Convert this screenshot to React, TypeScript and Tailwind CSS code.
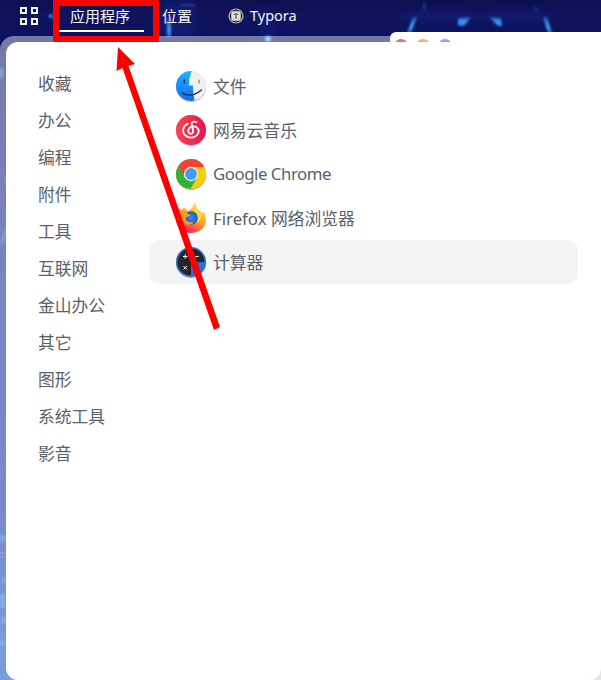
import type { ReactNode } from "react";

const categories = ["收藏", "办公", "编程", "附件", "工具", "互联网", "金山办公", "其它", "图形", "系统工具", "影音"];

function FilesIcon() {
  return (
    <svg viewBox="0 0 32 32" className="size-8">
      <defs>
        <linearGradient id="finder" x1="0" y1="0" x2="0" y2="1"><stop stopColor="#18b9ff" /><stop offset="1" stopColor="#1767ed" /></linearGradient>
        <clipPath id="disc"><circle cx="16" cy="16" r="15" /></clipPath>
      </defs>
      <circle cx="16" cy="16.7" r="15.2" fill="#b9b9bd" />
      <g clipPath="url(#disc)">
        <path d="M0 0H32V32H0z" fill="#f0f0f1" />
        <path d="M0 0H17Q14 7 13.8 15.5H18Q17.7 24 20 32H0z" fill="url(#finder)" />
      </g>
      <path d="M9.3 10v3" fill="none" stroke="#20242e" strokeWidth="1.2" strokeLinecap="round" />
      <path d="M24 10v3" fill="none" stroke="#777" strokeWidth="1.2" strokeLinecap="round" />
      <path d="M7.5 23Q16 28.5 26.5 20" fill="none" stroke="#20242e" strokeWidth="1.2" strokeLinecap="round" />
    </svg>
  );
}

function MusicIcon() {
  return (
    <svg viewBox="0 0 32 32" className="size-8">
      <defs><linearGradient id="music"><stop stopColor="#ff4050" /><stop offset="1" stopColor="#e9144c" /></linearGradient></defs>
      <circle cx="16" cy="16.7" r="15.2" fill="#b8a9ad" />
      <circle cx="16" cy="16" r="15" fill="url(#music)" />
      <path d="M21.5 8.2C18.8 6.8 16.4 8 16.7 10.4L18.1 17C18.5 19.6 15.3 20.7 13.8 18.7C12.2 16.2 14.2 13 17.4 12.4C22.4 11.6 25.2 16.2 22.8 20.1C20.5 23.9 14.5 24.8 10.8 21.8C6.2 18 7.9 11.6 12.7 9.8" fill="none" stroke="#fff" strokeWidth="1.8" strokeLinecap="round" />
    </svg>
  );
}

function ChromeIcon() {
  return (
    <svg viewBox="0 0 32 32" className="size-8">
      <circle cx="16" cy="16.7" r="15.2" fill="#aab3a4" />
      <circle cx="16" cy="16" r="15" fill="#fccb08" />
      <path d="M3.2 8.2A15 15 0 0 1 29.3 9H16L9 18.5z" fill="#ed4634" />
      <path d="M3.2 8.2A15 15 0 0 0 15.5 31L22.2 19.5 16 23 9.8 19.5z" fill="#2fb13b" />
      <circle cx="16" cy="16" r="7.2" fill="#e9efe8" />
      <circle cx="16" cy="16" r="5.9" fill="#439af7" />
    </svg>
  );
}

function FirefoxIcon() {
  return (
    <svg viewBox="0 0 32 32" className="size-8">
      <defs>
        <linearGradient id="fox" x1=".8" y1=".1" x2=".3" y2="1"><stop stopColor="#ffe44b" /><stop offset=".5" stopColor="#ff9a29" /><stop offset=".75" stopColor="#ff523f" /><stop offset="1" stopColor="#f50980" /></linearGradient>
        <radialGradient id="globe"><stop stopColor="#328ef7" /><stop offset="1" stopColor="#1760bd" /></radialGradient>
      </defs>
      <path d="M4 6L7 8L9 5L12 9Q15 8 17 6L20 0Q21 6 25 9L28 11L28 8Q31 13 31 18C31 26 24 31 16 31C8 31 1 25 1 17Q1 10 4 6z" fill="url(#fox)" />
      <circle cx="16" cy="16" r="6.7" fill="url(#globe)" />
      <path d="M5 9L12 9Q11 12 16 13Q13 15 11 15Q10 18 12 19Q15 21 19 20Q16 24 11 22Q6 19 5 9z" fill="#ff9c1f" />
      <path d="M19 2Q18 6 20 9Q25 14 22 21Q28 17 27 10Q21 7 20 1z" fill="#ffd83e" />
    </svg>
  );
}

function CalculatorIcon() {
  return (
    <svg viewBox="0 0 32 32" className="size-8">
      <circle cx="16" cy="16.7" r="15.2" fill="#aaa" />
      <circle cx="16" cy="16" r="15" fill="#2671d3" />
      <path d="M16 2.5A13.5 13.5 0 0 0 16 29.5V16H29.5A13.5 13.5 0 0 0 16 2.5" fill="#252529" />
      <path d="M8 10.5h4.4M10.2 8.3v4.4M19.5 10.5h4.2M8.5 20l3.5 3.5m0-3.5-3.5 3.5" stroke="#fff" strokeWidth="1" />
    </svg>
  );
}

const apps: { name: string; icon: ReactNode; labelClass?: string; active?: boolean }[] = [
  { name: "文件", icon: <FilesIcon /> },
  { name: "网易云音乐", icon: <MusicIcon /> },
  { name: "Google Chrome", icon: <ChromeIcon />, labelClass: "tracking-[-0.45px]" },
  { name: "Firefox 网络浏览器", icon: <FirefoxIcon /> },
  { name: "计算器", icon: <CalculatorIcon />, active: true },
];

function Wallpaper() {
  return (
    <svg className="absolute inset-0 size-full" viewBox="0 0 601 680" preserveAspectRatio="none">
      <defs>
        <linearGradient id="top" x1="0" y1="0" x2="0" y2="1"><stop stopColor="#0b1050" /><stop offset=".4" stopColor="#10145c" /><stop offset="1" stopColor="#0a1160" /></linearGradient>
        <linearGradient id="side" x1="0" y1="0" x2="0" y2="1"><stop stopColor="#07105b" /><stop offset=".3" stopColor="#142390" /><stop offset=".75" stopColor="#1a2fa8" /><stop offset="1" stopColor="#1453c8" /></linearGradient>
        <linearGradient id="beam" x1="0" y1="0" x2="0" y2="1"><stop stopColor="#1c4fc4" /><stop offset=".6" stopColor="#3fa4f2" /><stop offset="1" stopColor="#1f66d8" /></linearGradient>
        <filter id="glow"><feGaussianBlur stdDeviation="0.9" /></filter>
        <filter id="haze" x="-50%" y="-50%" width="200%" height="200%"><feGaussianBlur stdDeviation="6 4" /></filter>
      </defs>
      <path d="M0 0H601V680H0z" fill="url(#side)" />
      <path d="M0 0H601V42H0z" fill="url(#top)" />
      <g filter="url(#haze)" fill="#1d2fa6" opacity=".3">
        <path d="M160 0h34v36h-34zM262 8h12v34h-12zM405 12h70v8h-70zM486 12h62v8h-62z" />
      </g>
      <g filter="url(#glow)" fill="url(#beam)">
        <path d="M413 17H417L411 33H407z" /><path d="M458 18L471 17 464 26H458z" /><path d="M489 17L501 18 502 27 497 25z" /><path d="M543 17H547L552 33H548z" />
        <path d="M167 18h4v19h-4z" />
        <ellipse cx="51" cy="16" rx="2.5" ry="2" />
        <circle cx="268" cy="39" r="3" fill="#5faaff" />
        <path d="M180 4h15v2h-15zM534 6l4 5-2 1zM423 3h3l-2 8z" opacity=".5" />
      </g>
      <g filter="url(#glow)" fill="#2f98e6">
        <path d="M0 68h3v10H0zM5 178h1v6H5zM6 227Q6 241 0 246" opacity=".7" />
        <path d="M0 535h6v7H0zM0 552h5v5H0zM2 578h4v5H2zM0 594h5v14H0zM2 617h4v7H2zM0 640h5v6H0z" opacity=".5" />
      </g>
      <path d="M0 555h6" stroke="#302d88" strokeWidth="2" />
    </svg>
  );
}

export default function App() {
  return (
    <div className="relative flex h-[680px] w-[601px] flex-col overflow-hidden bg-[#07105b] font-['Noto_Sans','Noto_Sans_CJK_SC',sans-serif] text-[#59616a]">
      <Wallpaper />
      <header className="relative flex h-8 shrink-0 items-start text-[15px] leading-8 text-[#f4f4f6]">
        <svg className="ml-[19px] mt-[6px] size-5" viewBox="0 0 20 20" fill="#10133f" stroke="#f2f2ed" strokeWidth="2"><path d="M2 2h5v5H2zM13 2h5v5h-5zM2 13h5v5H2zM13 13h5v5h-5z" /></svg>
        <div className="ml-5 h-8 w-[85px] border-b-2 border-white pl-[11px]">应用程序</div>
        <div className="ml-[18px]">位置</div>
        <svg className="ml-9 mt-2 size-4" viewBox="0 0 16 16"><circle cx="8" cy="8" r="7" fill="#34343c" stroke="#b9b9b5" strokeWidth="1.2" /><rect x="3.3" y="3.3" width="9.4" height="9.4" rx="2" fill="#dededb" /><path d="M6 6.5V6h4v.5M8 6v4M7.2 10h1.6" fill="none" stroke="#454545" strokeWidth="1" /></svg>
        <span className="ml-[6px] text-[14.5px] leading-[30px]">Typora</span>
      </header>
      <div className="relative mt-1 min-h-0 flex-1 rounded-tl-[14px] bg-white/[.43] pl-[6px] pt-[6px]">
        <div className="absolute -top-1 bottom-5 left-[390px] right-0 overflow-hidden rounded-tl-md bg-white">
          <div className="ml-1 mt-[7px] flex gap-2">
            <i className="size-[14px] rounded-full bg-[#db7174]" /><i className="size-[14px] rounded-full bg-[#f7ae61]" /><i className="size-[14px] rounded-full bg-[#82a9f1]" />
          </div>
        </div>
        <div className="absolute bottom-0 right-0 size-5 bg-[#e4e4e4]" />
        <main className="relative flex h-[638px] rounded-[12px] bg-white text-[16.8px]">
          <nav className="ml-8 flex w-[111px] flex-col pt-[23px]">
            {categories.map((name) => <div key={name} className="h-[37px] leading-[37px]">{name}</div>)}
          </nav>
          <section className="w-[429px] pt-[22px]">
            {apps.map((app) => (
              <div key={app.name} className={`flex h-11 items-center gap-[6px] rounded-[10px] pl-[26px] ${app.active ? "bg-[#f4f4f4]" : ""}`}>
                {app.icon}<span className={`${app.labelClass ?? "pt-px"} leading-[42px]`}>{app.name}</span>
              </div>
            ))}
          </section>
        </main>
      </div>
      <svg className="pointer-events-none absolute inset-0 size-full" viewBox="0 0 601 680">
        <path d="M56 3H156V39H56z" fill="none" stroke="#f00" strokeWidth="6" />
        <path d="M118 47L135 64 128.5 66 220 327 214 330 122.5 68 116.5 71z" fill="#f00" />
      </svg>
    </div>
  );
}
